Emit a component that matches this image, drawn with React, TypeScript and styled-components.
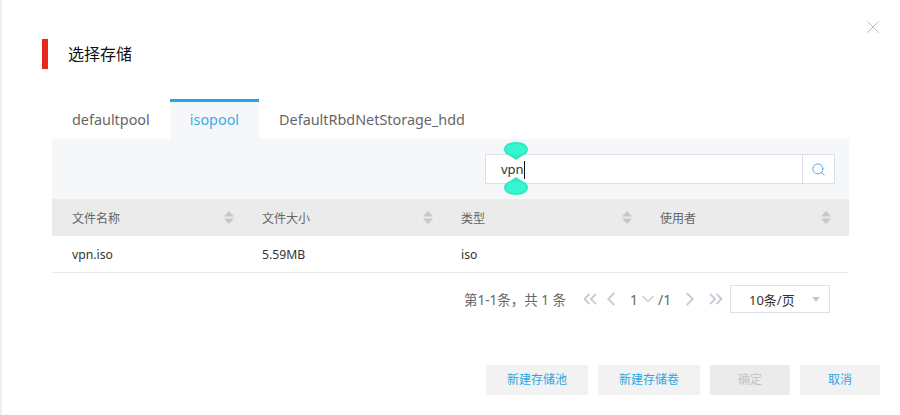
import React from 'react';
import styled, { createGlobalStyle } from 'styled-components';
import { ChevronDown, ChevronLeft, ChevronRight, ChevronsLeft, ChevronsRight, Search, X } from 'lucide-react';

const GlobalStyle = createGlobalStyle`
  html, body {
    margin: 0;
    padding: 0;
    background: #fff;
    font-family: "Noto Sans", "Noto Sans CJK SC", sans-serif;
  }
`;

const columns = ['文件名称', '文件大小', '类型', '使用者'];
const rows = [{ name: 'vpn.iso', size: '5.59MB', type: 'iso', user: '' }];

const SortIcon: React.FC = () => (
  <svg width="10" height="13" viewBox="0 0 10 13">
    <path d="M5 0 L10 5.5 H0 Z M0 7.5 H10 L5 13 Z" fill="#c6c8cf" />
  </svg>
);

const Handle: React.FC<{ flip?: boolean }> = ({ flip }) => (
  <svg width="24" height="18" viewBox="0 0 24 18" style={flip ? { transform: 'scaleY(-1)' } : undefined}>
    <path d="M12 18 L6 14 C2 12.5 0 10.5 0 7.5 C0 3 5 0 12 0 C19 0 24 3 24 7.5 C24 10.5 22 12.5 18 14 Z" fill="#2fe8c4" />
    <path d="M12 2 C17 2 22 4 22 7.5 C22 10.5 18 13 12 13 C6 13 2 10.5 2 7.5 C2 4 7 2 12 2 Z" fill="#33f7ce" />
  </svg>
);

const App: React.FC = () => {
  return (
    <Page>
      <GlobalStyle />
      <CloseButton>
        <X size={22} strokeWidth={1} />
      </CloseButton>

      <Header>
        <RedBar />
        <Title>选择存储</Title>
      </Header>

      <Tabs>
        <Tab>defaultpool</Tab>
        <Tab $active>isopool</Tab>
        <Tab>DefaultRbdNetStorage_hdd</Tab>
      </Tabs>

      <Toolbar>
        <SearchBox>
          <SearchInput>
            <SearchText>
              vpn
              <Caret />
              <TopHandle>
                <Handle />
              </TopHandle>
              <BottomHandle>
                <Handle flip />
              </BottomHandle>
            </SearchText>
          </SearchInput>
          <SearchButton>
            <Search size={15} strokeWidth={1.4} />
          </SearchButton>
        </SearchBox>
      </Toolbar>

      <Table>
        <HeadRow>
          {columns.map(col => (
            <HeadCell key={col}>
              <span>{col}</span>
              <SortIcon />
            </HeadCell>
          ))}
        </HeadRow>
        {rows.map(row => (
          <BodyRow key={row.name}>
            <BodyCell>{row.name}</BodyCell>
            <BodyCell>{row.size}</BodyCell>
            <BodyCell>{row.type}</BodyCell>
            <BodyCell>{row.user}</BodyCell>
          </BodyRow>
        ))}
      </Table>

      <Pagination>
        <Total>第1-1条，共 1 条</Total>
        <PageIcon $gap={0}><ChevronsLeft size={22} strokeWidth={2} /></PageIcon>
        <PageIcon $gap={1}><ChevronLeft size={22} strokeWidth={2} /></PageIcon>
        <PageNumber>
          1
          <ChevronDown size={20} strokeWidth={1} color="#888" />
          /1
        </PageNumber>
        <PageIcon $gap={9}><ChevronRight size={22} strokeWidth={2} /></PageIcon>
        <PageIcon $gap={6}><ChevronsRight size={22} strokeWidth={2} /></PageIcon>
        <PageSize>
          <span>10条/页</span>
          <SelectArrow />
        </PageSize>
      </Pagination>

      <Footer>
        <ActionButton $width={102}>新建存储池</ActionButton>
        <ActionButton $width={102}>新建存储卷</ActionButton>
        <ActionButton $width={80} $disabled>确定</ActionButton>
        <ActionButton $width={80}>取消</ActionButton>
      </Footer>
    </Page>
  );
};

const Page = styled.div`
  position: relative;
  box-sizing: border-box;
  width: 900px;
  height: 415px;
  overflow: hidden;
  padding-top: 39px;
  background: #fff;
  border-left: 2px solid #efefef;
`;

const CloseButton = styled.div`
  position: absolute;
  top: 16px;
  right: 16px;
  display: flex;
  color: #a9bcc8;
`;

const Header = styled.div`
  display: flex;
  align-items: center;
  height: 30px;
  margin-left: 40px;
`;

const RedBar = styled.div`
  width: 6px;
  height: 30px;
  background: #e8261c;
`;

const Title = styled.div`
  margin: -2px 0 0 20px;
  font-size: 16px;
  color: #111;
`;

const Tabs = styled.div`
  display: flex;
  margin: 30px 0 0 50px;
  height: 40px;
`;

const Tab = styled.div<{ $active?: boolean }>`
  box-sizing: border-box;
  padding: 0 20px;
  font-size: 14.4px;
  line-height: 35px;
  border-top: 3px solid ${p => (p.$active ? '#25a5e4' : 'transparent')};
  background: ${p => (p.$active ? '#f6f7f9' : 'transparent')};
  color: ${p => (p.$active ? '#3fa9e8' : '#666')};
`;

const Toolbar = styled.div`
  display: flex;
  justify-content: flex-end;
  box-sizing: border-box;
  width: 797px;
  height: 60px;
  margin-left: 50px;
  padding: 15px 14px 0 0;
  background: #f6f7f9;
`;

const SearchBox = styled.div`
  display: flex;
  box-sizing: border-box;
  width: 350px;
  height: 30px;
  background: #fff;
  border: 1px solid #dcdfe8;
`;

const SearchInput = styled.div`
  flex: 1;
  padding-left: 15px;
  font-size: 13px;
  line-height: 28px;
  color: #333;
`;

const SearchText = styled.span`
  position: relative;
  display: inline-block;
`;

const Caret = styled.span`
  position: absolute;
  top: 6px;
  right: -1px;
  width: 1px;
  height: 18px;
  background: #111;
`;

const TopHandle = styled.span`
  position: absolute;
  top: -13px;
  left: 3px;
  display: flex;
`;

const BottomHandle = styled.span`
  position: absolute;
  top: 22px;
  left: 3px;
  display: flex;
`;

const SearchButton = styled.div`
  display: flex;
  align-items: center;
  justify-content: center;
  width: 31px;
  border-left: 1px solid #dcdfe8;
  color: #4a9fe0;
`;

const Table = styled.div`
  width: 797px;
  margin-left: 50px;
`;

const HeadRow = styled.div`
  display: grid;
  grid-template-columns: 190px 199px 199px 199px;
  height: 37px;
  background: #ebebeb;
`;

const HeadCell = styled.div`
  display: flex;
  align-items: center;
  justify-content: space-between;
  padding: 0 8px 0 20px;
  font-size: 12px;
  color: #666;
`;

const BodyRow = styled.div`
  display: grid;
  grid-template-columns: 190px 199px 199px 199px;
  height: 37px;
  box-sizing: border-box;
  border-bottom: 1px solid #e8e8e8;
`;

const BodyCell = styled.div`
  display: flex;
  align-items: center;
  padding-left: 20px;
  font-size: 12.2px;
  color: #333;
`;

const Pagination = styled.div`
  display: flex;
  align-items: center;
  justify-content: flex-end;
  width: 828px;
  height: 28px;
  margin-top: 12px;
  font-size: 13px;
  color: #666;
`;

const Total = styled.span`
  margin-right: 14px;
  font-size: 13.5px;
`;

const PageIcon = styled.span<{ $gap: number }>`
  display: flex;
  justify-content: center;
  width: 20px;
  margin-left: ${p => p.$gap}px;
  color: #c5cbd6;

  svg {
    flex-shrink: 0;
  }
`;

const PageNumber = styled.span`
  display: flex;
  align-items: center;
  justify-content: space-between;
  width: 41px;
  margin-left: 9px;
  font-size: 14px;

  svg {
    flex-shrink: 0;
  }
`;

const PageSize = styled.div`
  display: flex;
  align-items: center;
  justify-content: space-between;
  box-sizing: border-box;
  width: 100px;
  height: 28px;
  margin-left: 4px;
  padding: 0 9px 0 18px;
  border: 1px solid #dcdfe8;
  color: #333;
`;

const SelectArrow = styled.span`
  width: 0;
  height: 0;
  border-left: 4px solid transparent;
  border-right: 4px solid transparent;
  border-top: 5px solid #c5c8cf;
`;

const Footer = styled.div`
  display: flex;
  justify-content: flex-end;
  gap: 10px;
  width: 878px;
  margin-top: 52px;
`;

const ActionButton = styled.div<{ $width: number; $disabled?: boolean }>`
  width: ${p => p.$width}px;
  height: 30px;
  line-height: 30px;
  text-align: center;
  font-size: 12px;
  background: ${p => (p.$disabled ? '#ebebeb' : '#f2f2f2')};
  color: ${p => (p.$disabled ? '#c4c4c4' : '#2ba4e6')};
`;

export default App;
